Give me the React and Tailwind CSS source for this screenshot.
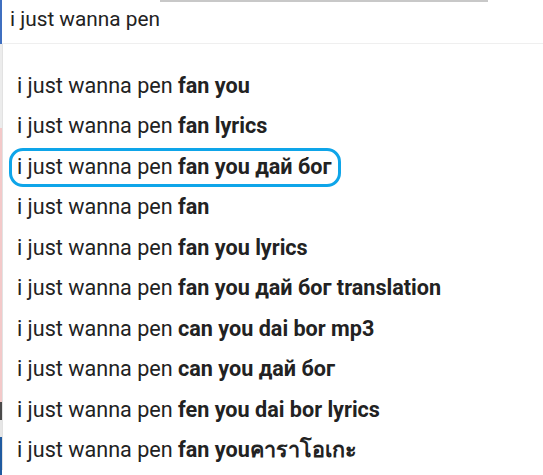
import React from "react";

const items = [
  ["fan you"],
  ["fan lyrics"],
  ["fan you дай бог", true],
  ["fan"],
  ["fan you lyrics"],
  ["fan you дай бог translation"],
  ["can you dai bor mp3"],
  ["can you дай бог"],
  ["fen you dai bor lyrics"],
  ["fan youคาราโอเกะ"],
];

export default function App() {
  return (
    <div className="relative w-[543px] h-[475px] overflow-hidden bg-white text-[#222222]" style={{ fontFamily: "Roboto, 'Noto Sans', sans-serif" }}>
      <div className="absolute left-[160px] top-0 w-[328px] h-[2px] bg-[#c8c8c8]" />
      <div className="flex">
        <div className="flex flex-col w-[2px]">
          <div className="h-[44px] bg-[#3f6fc0]" />
          <div className="h-[84px] bg-[#ececec]" />
          <div className="h-[274px] bg-[#f3c9c9]" />
          <div className="h-[18px] bg-[#4a4a4a]" />
          <div className="h-[17px] bg-[#e6e6e6]" />
          <div className="h-[38px] bg-[#1f5aa0]" />
        </div>
        <div className="flex-1 flex flex-col">
          <div className="h-[44px] border-b border-[#efefef] flex items-center pl-[8px] text-[20.8px] pb-[4px]">
            i just wanna pen
          </div>
          <div className="border-l border-[#e2e2e2] pt-[22px] flex flex-col">
            {items.map(([b, hl], i) => (
              <div key={i} className="h-[40.45px] flex items-center pl-[14px] text-[21.6px] relative">
                {hl && (
                  <div className="absolute left-[6px] top-[1px] w-[332px] h-[39px] border-[3px] border-[#0ea5e9] rounded-[14px]" />
                )}
                <span className="whitespace-pre">i just wanna pen </span>
                <span className="font-bold whitespace-pre">{b}</span>
              </div>
            ))}
          </div>
        </div>
      </div>
    </div>
  );
}
